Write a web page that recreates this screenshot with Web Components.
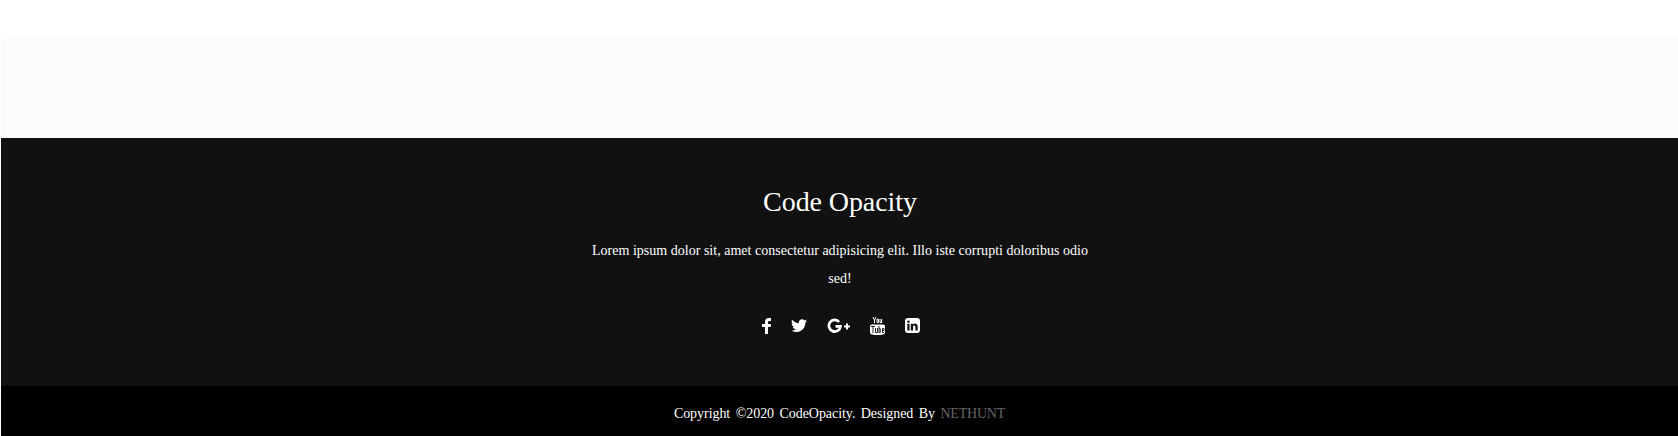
<!DOCTYPE html>
<html lang="en"><head><meta charset="utf-8"><title>Code Opacity</title>
<style>html,body{margin:0;height:100%;background:#fff}body{overflow:hidden;font-family:"Liberation Serif",serif}</style></head>
<body><site-page></site-page>
<script>
const define=(name,html)=>customElements.define(name,class extends HTMLElement{
  constructor(){super();const t=document.createElement('template');t.innerHTML=html;this.attachShadow({mode:'open'}).append(t.content.cloneNode(true));}
});
define('social-links',`<style>:host{display:flex;justify-content:center;height:18px;padding-left:3px;gap:20px}a{display:block;height:18px;color:#fff}svg{display:block;height:18px}</style>
<a aria-label="Facebook"><svg width="9" viewBox="0 0 9 18" fill="currentColor"><path d="M9 1v3H7.4Q6 4 6 5.4V7h3l-.4 3H6v7H3v-7H0V7h3V5Q3 1 7 1z"/></svg></a>
<a aria-label="Twitter"><svg width="16" viewBox="108 36 1576 1792" preserveAspectRatio="none" fill="currentColor"><path d="M1684 408q-67 98-162 167 1 14 1 42 0 130-38 259.500t-115.500 248.500-184.500 210.500-258 146-323 54.500q-271 0-496-145 35 4 78 4 225 0 401-138-105-2-188-64.500t-114-159.500q33 5 61 5 43 0 85-11-112-23-185.500-111.500t-73.500-205.500v-4q68 38 146 41-66-44-105-115t-39-154q0-88 44-163 121 149 294.500 238.500t371.500 99.500q-8-38-8-74 0-134 94.500-228.500t228.500-94.500q140 0 236 102 109-21 205-78-37 115-142 178 93-10 186-50z"/></svg></a>
<a aria-label="Google Plus"><svg width="23" viewBox="-1 0 23 18" fill="none" stroke="currentColor"><path d="M11.200 5A5.800 5.800 0 1 0 12.500 9.300H7.500" stroke-width="2.700"/><path d="M16 9.500h6M19 6.500v6" stroke-width="2"/></svg></a>
<a aria-label="YouTube"><svg width="15" viewBox="0 0 15 18"><path d="M3 0l1.500 3.200L6 0M4.500 3v3M7 2.200v3.300h1.500V2.200zM10 2v3.500h1.600M11.600 2v4" fill="none" stroke="#fff"/><path d="M2 7.500h11q2 0 2 2v5.500q0 2.500-2 2.500Q7.500 18.500 2 17.500 0 17.500 0 15V9.500q0-2 2-2z" fill="#fff"/><path d="M1 9.500h4M3 9.500V16M5.500 11v4.500h1.500M7.500 11v5M9 9v6.500h1.300v-3.800H9M12 13.500h2v-2h-1.500V15.500H14" fill="none" stroke="#111" stroke-width=".9"/></svg></a>
<a aria-label="LinkedIn"><svg width="15" viewBox="128 26 1536 1843" preserveAspectRatio="none" fill="currentColor"><path d="M365 1414h231v-694h-231v694zm246-908q-1-52-36-86t-93-34-94.500 34-36.500 86q0 51 35.500 85.500t92.500 34.500h1q59 0 95-34.500t36-85.500zm585 908h231v-398q0-154-73-233t-193-79q-136 0-209 117h2v-101h-231q3 66 0 694h231v-388q0-38 7-56 15-35 45-59.500t74-24.500q116 0 116 157v371zm468-998v960q0 119-84.500 203.500t-203.500 84.500h-960q-119 0-203.500-84.500t-84.500-203.500v-960q0-119 84.500-203.500t203.500-84.500h960q119 0 203.500 84.500t84.500 203.500z"/></svg></a>`);
define('footer-content',`<style>:host{display:flex;flex-direction:column;align-items:center;height:248px;box-sizing:border-box;padding-top:46px;background:#111;color:#fff;text-align:center}
h3{margin:0;padding-left:1px;font:400 28px/36px "Liberation Serif",serif;letter-spacing:-.08px}p{margin:17px 0 24px;width:500px;padding-left:1px;font-size:14px;line-height:28px;letter-spacing:.015px}social-links{width:100%;box-sizing:border-box}</style>
<h3>Code Opacity</h3><p><slot></slot></p><social-links></social-links>`);
define('footer-bottom',`<style>:host{display:block;height:50px;background:#000;color:#fff;text-align:center;font-size:14px;line-height:56px;word-spacing:2px;letter-spacing:-.05px}span{color:#666;letter-spacing:-.2px}</style>Copyright ©2020 CodeOpacity. Designed By <span>NETHUNT</span>`);
define('site-page',`<style>:host{display:flex;flex-direction:column;height:436px;padding-left:1px;background:#fff}.band{height:103px;margin-top:35px;background:#fcfcfc}</style>
<div class="band"></div><footer-content>Lorem ipsum dolor sit, amet consectetur adipisicing elit. Illo iste corrupti doloribus odio sed!</footer-content><footer-bottom></footer-bottom>`);
</script></body></html>
